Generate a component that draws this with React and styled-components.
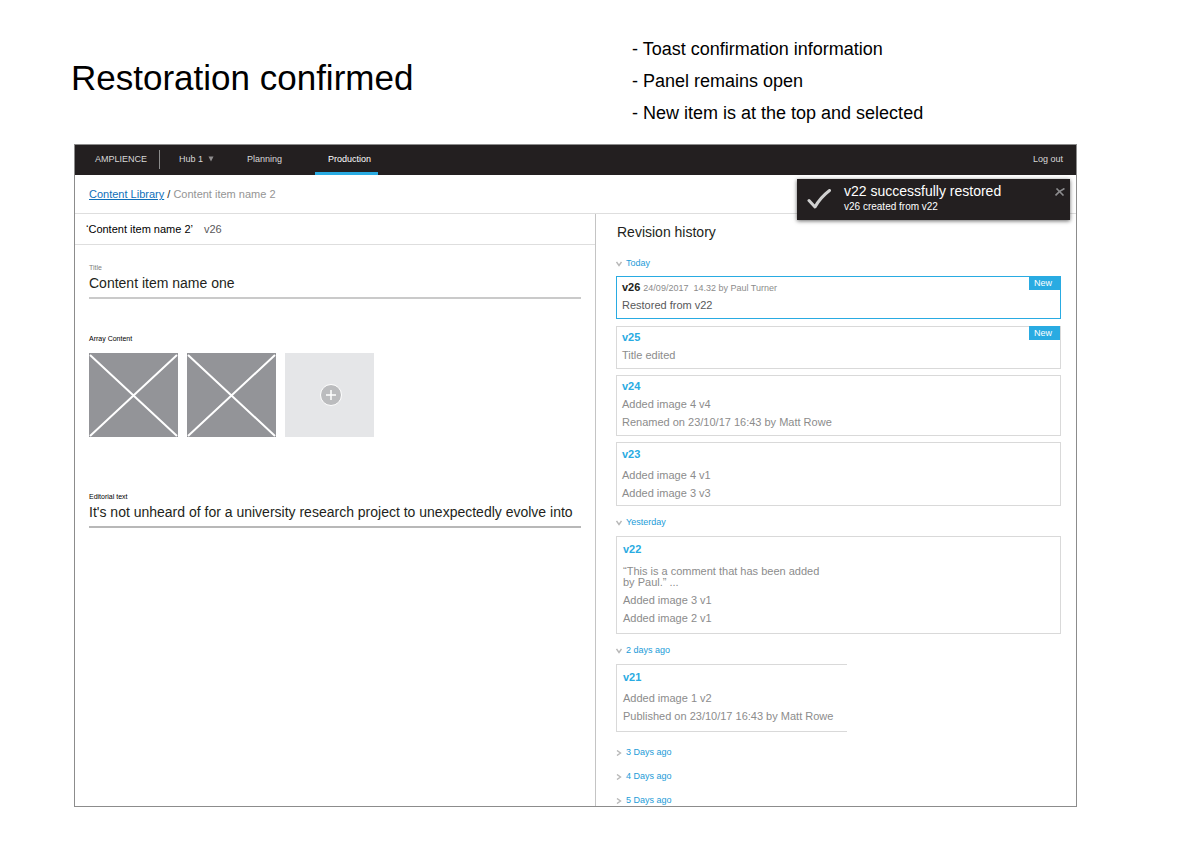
import React, { useState } from 'react';
import styled, { createGlobalStyle, css } from 'styled-components';

const GlobalStyle = createGlobalStyle`
  *,
  *::before,
  *::after {
    box-sizing: border-box;
  }

  body {
    margin: 0;
    background: #fff;
    color: #231f20;
    font-family: "Liberation Sans", Arial, sans-serif;
  }

  button,
  input {
    margin: 0;
    padding: 0;
    border: 0;
    border-radius: 0;
    background: none;
    color: inherit;
    font-family: inherit;
  }

  button {
    cursor: pointer;
  }
`;

const revisionGroups = [
  {
    label: 'Today',
    open: true,
    revisions: [
      {
        version: 'v26',
        meta: '24/09/2017  14.32 by Paul Turner',
        changes: ['Restored from v22'],
        isNew: true,
        selected: true,
      },
      { version: 'v25', changes: ['Title edited'], isNew: true },
      {
        version: 'v24',
        changes: ['Added image 4 v4', 'Renamed on 23/10/17 16:43 by Matt Rowe'],
      },
      {
        version: 'v23',
        changes: ['Added image 4 v1', 'Added image 3 v3'],
        density: 'normal',
      },
    ],
  },
  {
    label: 'Yesterday',
    open: true,
    revisions: [
      {
        version: 'v22',
        comment: '“This is a comment that has been added by Paul.” ...',
        changes: ['Added image 3 v1', 'Added image 2 v1'],
        density: 'loose',
      },
    ],
  },
  {
    label: '2 days ago',
    open: true,
    revisions: [
      {
        version: 'v21',
        changes: ['Added image 1 v2', 'Published on 23/10/17 16:43 by Matt Rowe'],
        density: 'loose',
        partial: true,
      },
    ],
  },
  { label: '3 Days ago', revisions: [] },
  { label: '4 Days ago', revisions: [] },
  { label: '5 Days ago', revisions: [] },
];

function Placeholder() {
  return (
    <Tile>
      <svg viewBox="0 0 89 85" preserveAspectRatio="none" aria-hidden="true">
        <path d="M1 2L88 84M88 2L1 84" stroke="#fff" strokeWidth="2" />
      </svg>
    </Tile>
  );
}

function Chevron({ open }) {
  return (
    <ChevronIcon viewBox="0 0 6 6" aria-hidden="true">
      <path d={open ? 'M0.5 1L3 4.5L5.5 1' : 'M1 0.5L4.5 3L1 5.5'} />
    </ChevronIcon>
  );
}

function Toast({ onClose }) {
  return (
    <ToastBox role="status">
      <CheckIcon viewBox="0 0 24 20" aria-hidden="true">
        <path d="M2 11.5L8 18C11 12.5 16 6.5 22.5 1.5" />
      </CheckIcon>
      <div>
        <ToastTitle>v22 successfully restored</ToastTitle>
        <ToastText>v26 created from v22</ToastText>
      </div>
      <CloseButton type="button" aria-label="Dismiss" onClick={onClose}>
        <svg viewBox="0 0 10 8" aria-hidden="true">
          <path d="M1.5 0.5L8.5 7.5M9.5 0.5C6 2 3 4.5 0.5 7.5" />
        </svg>
      </CloseButton>
    </ToastBox>
  );
}

function Revision({ version, meta, comment, changes, isNew, selected, partial, density = 'tight' }) {
  return (
    <Card $selected={selected} $partial={partial} $density={density}>
      <CardHead>
        {selected ? <Current>{version}</Current> : <VersionLink href={`#${version}`}>{version}</VersionLink>}
        {meta && <Meta>{meta}</Meta>}
      </CardHead>
      {comment && <Comment>{comment}</Comment>}
      <Changes $spaced={density !== 'tight'} $selected={selected}>
        {changes.map((change) => (
          <li key={change}>{change}</li>
        ))}
      </Changes>
      {isNew && <Badge>New</Badge>}
    </Card>
  );
}

function RevisionGroup({ group }) {
  const [open, setOpen] = useState(Boolean(group.open));

  return (
    <Group>
      <GroupToggle type="button" aria-expanded={open} onClick={() => setOpen(!open)}>
        <Chevron open={open} />
        {group.label}
      </GroupToggle>
      {open && group.revisions.length > 0 && (
        <Cards>
          {group.revisions.map((revision) => (
            <Revision key={revision.version} {...revision} />
          ))}
        </Cards>
      )}
    </Group>
  );
}

export default function App() {
  const [toastOpen, setToastOpen] = useState(true);

  return (
    <>
      <GlobalStyle />
      <Header>
        <Heading>Restoration confirmed</Heading>
        <Notes>
          <li>- Toast confirmation information</li>
          <li>- Panel remains open</li>
          <li>- New item is at the top and selected</li>
        </Notes>
      </Header>

      <Frame>
        <Nav>
          <Brand>AMPLIENCE</Brand>
          <HubButton type="button">
            Hub 1
            <svg viewBox="0 0 6 6" aria-hidden="true">
              <path d="M0.5 0.5H5.5L3 5.5Z" fill="#8f8d8e" />
            </svg>
          </HubButton>
          <NavLink href="#planning">Planning</NavLink>
          <NavLink href="#production" $active aria-current="page">
            Production
          </NavLink>
          <LogOut href="#logout">Log out</LogOut>
        </Nav>

        <Main>
          <Breadcrumb aria-label="Breadcrumb">
            <a href="#library">Content Library</a> / <span>Content item name 2</span>
          </Breadcrumb>

          <Columns>
            <Editor>
              <TitleBar>
                <ItemName>‘Content item name 2’</ItemName>
                <ItemVersion>v26</ItemVersion>
              </TitleBar>
              <Form>
                <Field>
                  <Label htmlFor="title" $muted>
                    Title
                  </Label>
                  <TextInput id="title" type="text" defaultValue="Content item name one" />
                </Field>
                <Field>
                  <Label as="div">Array Content</Label>
                  <Tiles>
                    <Placeholder />
                    <Placeholder />
                    <AddTile type="button" aria-label="Add content">
                      <svg viewBox="0 0 24 24" aria-hidden="true">
                        <circle cx="12" cy="12" r="10.5" fill="#bbbcbe" stroke="#fff" strokeWidth="1" />
                        <path d="M12 7V17M7 12H17" stroke="#fff" strokeWidth="1.5" />
                      </svg>
                    </AddTile>
                  </Tiles>
                </Field>
                <Field>
                  <Label htmlFor="editorial">Editorial text</Label>
                  <TextInput
                    id="editorial"
                    type="text"
                    $dark
                    defaultValue="It's not unheard of for a university research project to unexpectedly evolve into"
                  />
                </Field>
              </Form>
            </Editor>

            <History>
              <HistoryTitle>Revision history</HistoryTitle>
              {revisionGroups.map((group) => (
                <RevisionGroup key={group.label} group={group} />
              ))}
            </History>
          </Columns>

          {toastOpen && <Toast onClose={() => setToastOpen(false)} />}
        </Main>
      </Frame>
    </>
  );
}

const Header = styled.header`
  display: grid;
  grid-template-columns: minmax(0, 561fr) minmax(0, 445fr);
  padding: 33px 114px 15px 71px;
`;

const Heading = styled.h1`
  margin: 0;
  padding-top: 25px;
  font-size: 35px;
  line-height: 40px;
  font-weight: normal;
  color: #000;
`;

const Notes = styled.ul`
  margin: 0;
  padding: 0;
  list-style: none;
  font-size: 18px;
  line-height: 32px;
  color: #000;
`;

const Frame = styled.div`
  margin: 0 114px 36px 74px;
  border: 1px solid #8c8c8c;
`;

const Nav = styled.nav`
  display: flex;
  align-items: stretch;
  height: 30px;
  padding: 0 13px 0 20px;
  background: #231f20;
  color: #d8d8d8;
  font-size: 9px;
  line-height: 28px;
`;

const Brand = styled.div`
  align-self: flex-start;
  height: 19px;
  margin-top: 5px;
  padding-right: 12px;
  border-right: 1px solid #8c8c8c;
  line-height: 18px;
`;

const HubButton = styled.button`
  display: flex;
  align-items: center;
  gap: 5px;
  height: 28px;
  margin: 0 17px 0 19px;
  font-size: 9px;

  svg {
    width: 6px;
    height: 6px;
  }
`;

const NavLink = styled.a`
  margin: 0 3px 0 0;
  padding: 0 16px;
  border-bottom: 3px solid transparent;
  color: inherit;
  text-decoration: none;

  ${({ $active }) =>
    $active &&
    css`
      margin-left: 14px;
      padding: 0 7px 0 13px;
      border-color: #29abe2;
      color: #fff;
    `}
`;

const LogOut = styled.a`
  margin-left: auto;
  color: inherit;
  text-decoration: none;
`;

const Main = styled.main`
  position: relative;
`;

const Breadcrumb = styled.nav`
  height: 39px;
  padding-left: 14px;
  border-bottom: 1px solid #dedede;
  font-size: 11px;
  line-height: 38px;

  a {
    color: #0f6fb9;
  }

  span {
    color: #949494;
  }
`;

const Columns = styled.div`
  display: grid;
  grid-template-columns: minmax(0, 521fr) minmax(0, 480fr);
`;

const Editor = styled.section`
  border-right: 1px solid #c4c4c4;
`;

const TitleBar = styled.div`
  display: flex;
  gap: 11px;
  height: 31px;
  padding-left: 11px;
  border-bottom: 1px solid #dedede;
  font-size: 11px;
  line-height: 30px;
`;

const ItemName = styled.div`
  color: #000;
`;

const ItemVersion = styled.div`
  color: #58585a;
`;

const Form = styled.form`
  padding: 18px 14px;
`;

const Field = styled.div`
  & + & {
    margin-top: 35px;
  }

  &:last-child {
    margin-top: 55px;
  }
`;

const Label = styled.label`
  display: block;
  font-size: 7px;
  line-height: 10px;
  color: ${({ $muted }) => ($muted ? '#808080' : '#000')};
`;

const TextInput = styled.input`
  display: block;
  width: 100%;
  height: 26px;
  padding-bottom: 4px;
  border-bottom: 2px solid ${({ $dark }) => ($dark ? '#b8b8b8' : '#cacaca')};
  font-size: 14px;
  outline: none;
`;

const Tiles = styled.div`
  display: flex;
  gap: 9px;
  margin-top: 9px;
`;

const tileSize = css`
  width: 89px;
  height: 84px;
`;

const Tile = styled.div`
  ${tileSize}
  background: #939498;

  svg {
    display: block;
    width: 100%;
    height: 100%;
  }
`;

const AddTile = styled.button`
  ${tileSize}
  display: flex;
  align-items: center;
  justify-content: center;
  padding-left: 2px;
  background: #e5e6e8;

  svg {
    width: 24px;
    height: 24px;
  }
`;

const History = styled.section`
  padding: 10px 15px 0 20px;
`;

const HistoryTitle = styled.h2`
  margin: 0 0 18px;
  padding-left: 1px;
  font-size: 14px;
  line-height: 16px;
  font-weight: normal;
`;

const Cards = styled.div`
  display: grid;
  gap: 6px;
  padding: 7px 0 11px;
`;

const Group = styled.div`
  & > button:only-child {
    margin-bottom: 13px;
  }

  &:last-child > button:only-child {
    margin-bottom: 0;
  }

  & + & ${Cards} {
    padding-top: 8px;
  }

  /* extra room between the open days and the collapsed ones */
  &:nth-of-type(3) ${Cards} {
    padding-bottom: 15px;
  }
`;

const GroupToggle = styled.button`
  display: flex;
  align-items: center;
  gap: 4px;
  color: #1c9cd8;
  font-size: 9px;
  line-height: 11px;
`;

const ChevronIcon = styled.svg`
  width: 6px;
  height: 6px;
  margin-top: 1px;
  fill: none;
  stroke: #b8b8b8;
  stroke-width: 1.4;
`;

const cardPadding = {
  tight: '2px 5px 4px',
  normal: '3px 5px 3px',
  loose: '4px 6px 6px',
};

const Card = styled.article`
  position: relative;
  padding: ${({ $density }) => cardPadding[$density]};
  border: 1px solid #d9d9d9;

  ${({ $selected }) =>
    $selected &&
    css`
      margin-bottom: 1px;
      border-color: #29abe2;
    `}

  ${({ $partial }) =>
    $partial &&
    css`
      width: 52%;
      border-right: 0;
    `}
`;

const CardHead = styled.div`
  display: flex;
  align-items: baseline;
  gap: 3px;
  font-size: 11px;
  line-height: 17px;
`;

const Current = styled.strong`
  color: #231f20;
`;

const VersionLink = styled.a`
  color: #29abe2;
  font-weight: bold;
  text-decoration: none;
`;

const Meta = styled.span`
  color: #8c8c8c;
  font-size: 9px;
  line-height: 11px;
  white-space: pre;
`;

const Comment = styled.p`
  max-width: 200px;
  margin: 8px 0 0;
  color: #8c8c8c;
  font-size: 11px;
  line-height: 11px;
`;

const Changes = styled.ul`
  margin: ${({ $spaced }) => ($spaced ? '3px' : '0')} 0 0;
  padding: 0;
  list-style: none;
  color: ${({ $selected }) => ($selected ? '#58585a' : '#8c8c8c')};
  font-size: 11px;
  line-height: 18px;
  white-space: nowrap;
`;

const Badge = styled.span`
  position: absolute;
  top: -1px;
  right: 0;
  padding: 0 8px 0 5px;
  background: #29abe2;
  color: #fff;
  font-size: 9px;
  line-height: 14px;
`;

const ToastBox = styled.div`
  position: absolute;
  top: 4px;
  right: 6px;
  display: flex;
  width: 273px;
  height: 41px;
  padding: 4px 5px 0 10px;
  background: #231f20;
  box-shadow: 0 1px 4px rgba(0, 0, 0, 0.6);
  color: #fff;
`;

const CheckIcon = styled.svg`
  width: 24px;
  height: 20px;
  margin: 6px 13px 0 0;
  fill: none;
  stroke: #d0d0d0;
  stroke-width: 3;
  stroke-linecap: round;
  stroke-linejoin: round;
`;

const ToastTitle = styled.div`
  font-size: 14px;
  line-height: 17px;
`;

const ToastText = styled.div`
  font-size: 10px;
  line-height: 13px;
`;

const CloseButton = styled.button`
  align-self: flex-start;
  margin: 5px 0 0 auto;

  svg {
    display: block;
    width: 10px;
    height: 8px;
    fill: none;
    stroke: #8c8c8e;
    stroke-width: 1.6;
  }
`;
